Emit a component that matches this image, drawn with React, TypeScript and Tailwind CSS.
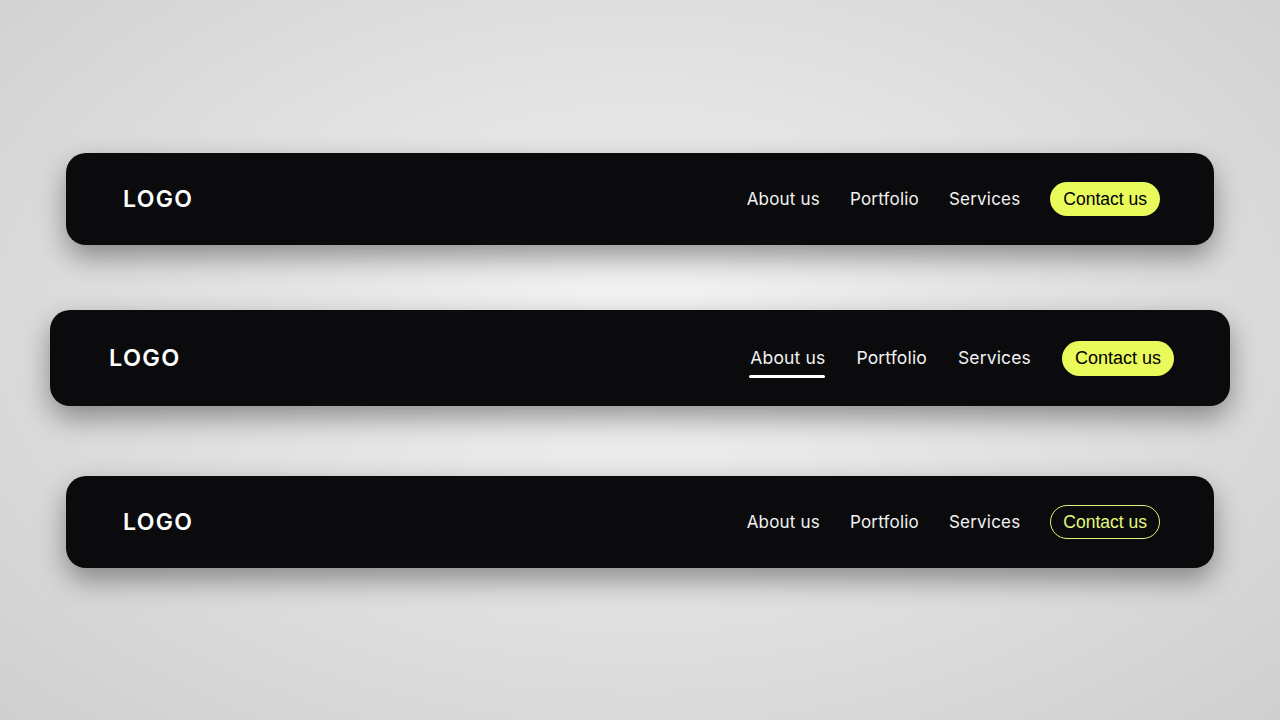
const links = ["About us", "Portfolio", "Services"];

function Navbar({
  variant,
  wide,
}: {
  variant: "solid" | "underline" | "outline";
  wide?: boolean;
}) {
  return (
    <nav
      className={
        wide
          ? "mx-[50px] flex h-[96px] items-center justify-between rounded-[20px] bg-[#0b0b0d] pl-[59px] pr-[56px] shadow-[0_12px_28px_rgba(0,0,0,0.38)]"
          : "mx-[66px] flex h-[92px] items-center justify-between rounded-[20px] bg-[#0b0b0d] pl-[57px] pr-[54px] shadow-[0_12px_28px_rgba(0,0,0,0.38)]"
      }
    >
      <span
        className={
          wide
            ? "font-['Inter',sans-serif] text-[23.5px] font-semibold tracking-[1.3px] text-white"
            : "font-['Inter',sans-serif] text-[23px] font-semibold tracking-[1.3px] text-white"
        }
      >
        LOGO
      </span>
      <div className={wide ? "flex items-center gap-[31px]" : "flex items-center gap-[30px]"}>
        {links.map((l, i) => (
          <a
            key={l}
            className={
              wide
                ? "relative pt-[1px] font-['Inter',sans-serif] text-[17.5px] tracking-[0.15px] text-[#f2f2f2]"
                : "relative pt-[1px] font-['Inter',sans-serif] text-[17px] tracking-[0.2px] text-[#f2f2f2]"
            }
          >
            {l}
            {variant === "underline" && i === 0 && (
              <span className="absolute -bottom-[6px] -left-[1px] right-0 h-[3px] rounded-full bg-white" />
            )}
          </a>
        ))}
        {variant === "outline" ? (
          <button className="h-[34px] rounded-full border border-[#dff27a] px-[12px] font-['Liberation_Sans',Arial,sans-serif] text-[17.5px] text-[#e6f87c]">
            Contact us
          </button>
        ) : (
          <button
            className={
              wide
                ? "h-[35px] rounded-full bg-[#e8fb5a] px-[13px] font-['Liberation_Sans',Arial,sans-serif] text-[18px] text-black"
                : "h-[34px] rounded-full bg-[#e8fb5a] px-[13px] font-['Liberation_Sans',Arial,sans-serif] text-[17.5px] text-black"
            }
          >
            Contact us
          </button>
        )}
      </div>
    </nav>
  );
}

export default function App() {
  return (
    <div className="h-[720px] w-[1280px] overflow-hidden bg-[radial-gradient(ellipse_at_50%_45%,#f4f4f4_0%,#e4e4e4_40%,#cfcfcf_100%)] pt-[153px]">
      <Navbar variant="solid" />
      <div className="h-[65px]" />
      <Navbar variant="underline" wide />
      <div className="h-[70px]" />
      <Navbar variant="outline" />
    </div>
  );
}
